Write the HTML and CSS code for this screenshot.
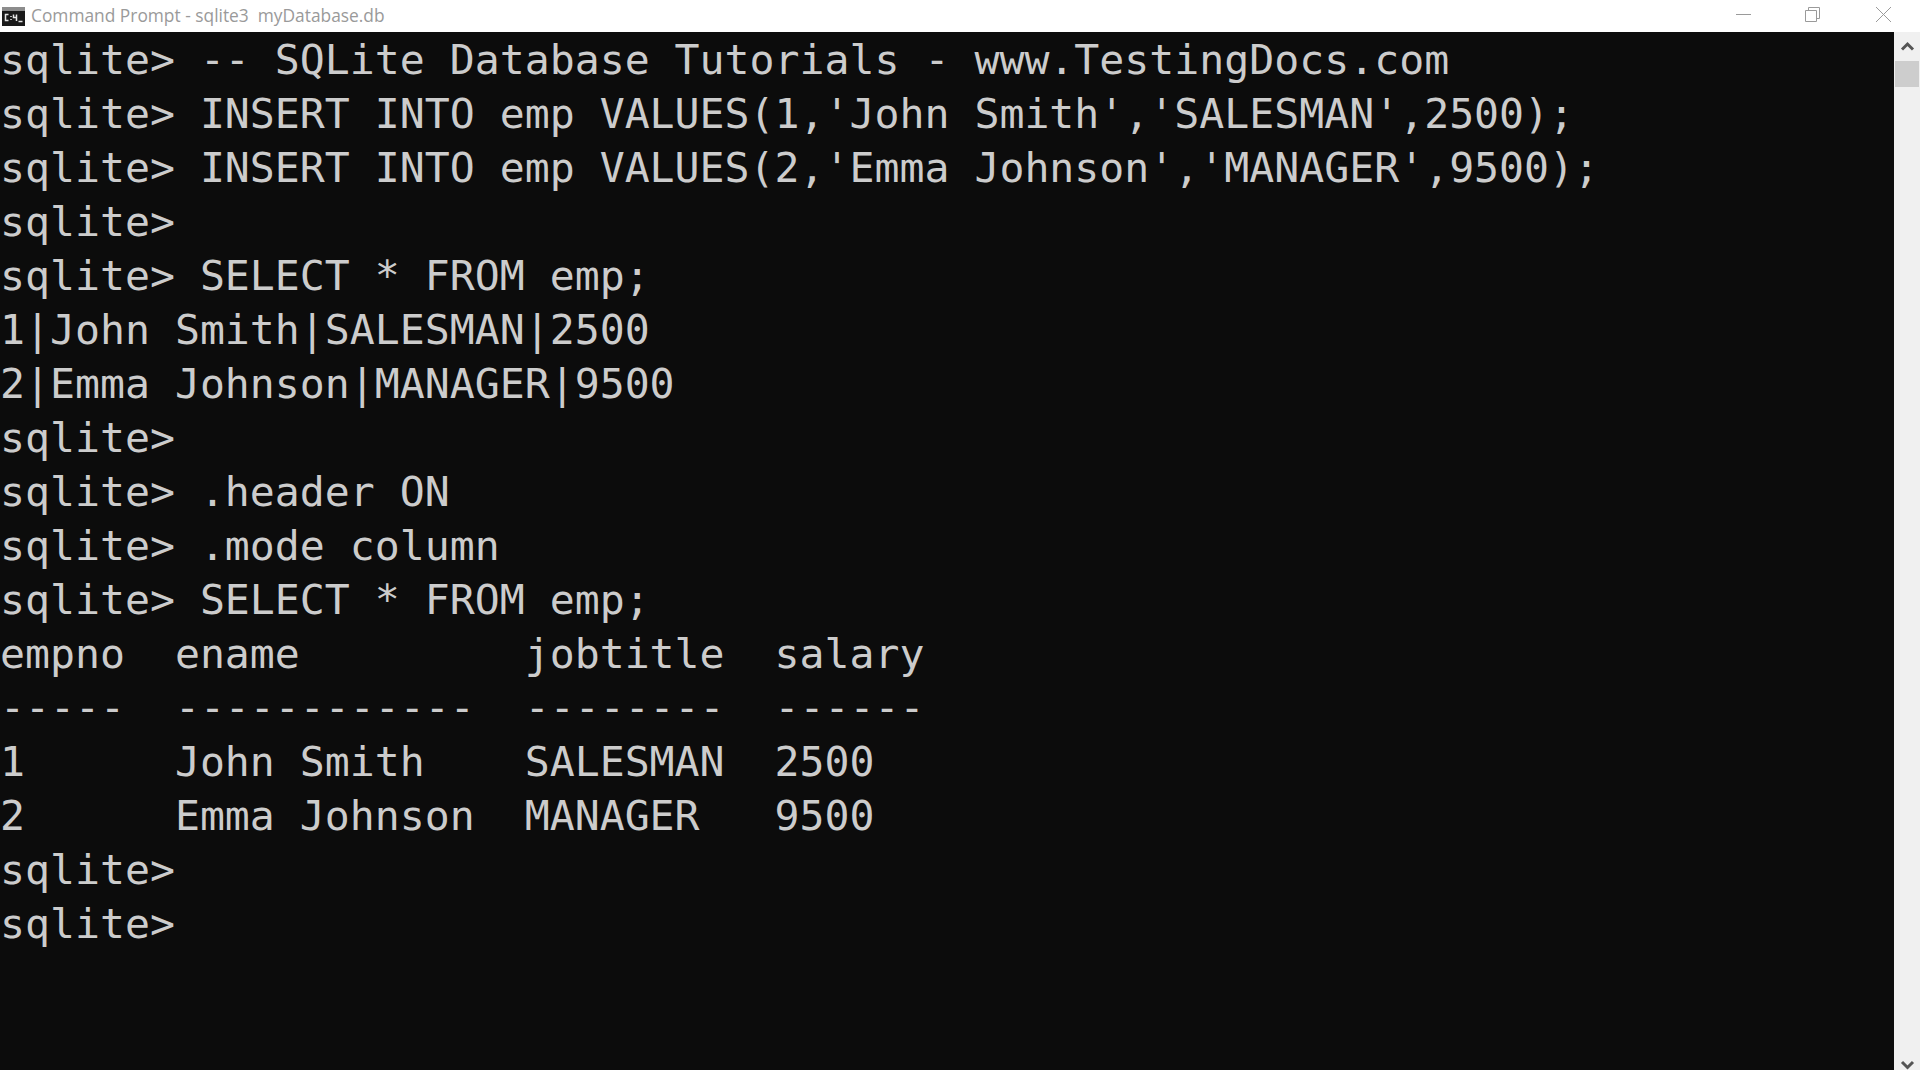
FILE: index.html
```html
<!DOCTYPE html>
<html lang="en">
<head>
<meta charset="utf-8">
<title>Command Prompt - sqlite3 myDatabase.db</title>
<link rel="stylesheet" href="styles.css">
</head>
<body>
<div class="window">
  <header class="titlebar">
    <svg class="app-icon" width="23" height="19" viewBox="0 0 23 19" aria-hidden="true">
      <rect x="0" y="0" width="23" height="19" fill="#1a1a1a"/>
      <rect x="0" y="0" width="23" height="4" fill="#8c8c8c"/>
      <path d="M6.5 7.5H3.5V13.5H6.5M9 9V10M9 12V13M11.5 7.5V10.5H14.5M14.5 7.5V14M16.5 14.5H20.5" fill="none" stroke="#e6e6e6" stroke-width="1.5"/>
    </svg>
    <span class="title">Command Prompt - sqlite3  myDatabase.db</span>
    <div class="controls">
      <svg class="ctl" width="46" height="32" viewBox="0 0 46 32" aria-hidden="true"><path d="M14 14.5H29" stroke="#9a9a9a" stroke-width="1"/></svg>
      <svg class="ctl ctl-restore" width="46" height="32" viewBox="0 0 46 32" aria-hidden="true"><path d="M14.5 10.5H25.5V21.5H14.5ZM17.5 10V7.5H28.5V18.5H26" fill="none" stroke="#9a9a9a" stroke-width="1"/></svg>
      <svg class="ctl ctl-close" width="46" height="32" viewBox="0 0 46 32" aria-hidden="true"><path d="M16 7L31 22M31 7L16 22" fill="none" stroke="#9a9a9a" stroke-width="1"/></svg>
    </div>
  </header>
  <div class="body">
    <main class="console">
      <div class="line">sqlite&gt; -- SQLite Database Tutorials - www.TestingDocs.com</div>
      <div class="line">sqlite&gt; INSERT INTO emp VALUES(1,'John Smith','SALESMAN',2500);</div>
      <div class="line">sqlite&gt; INSERT INTO emp VALUES(2,'Emma Johnson','MANAGER',9500);</div>
      <div class="line">sqlite&gt;</div>
      <div class="line">sqlite&gt; SELECT * FROM emp;</div>
      <div class="line">1|John Smith|SALESMAN|2500</div>
      <div class="line">2|Emma Johnson|MANAGER|9500</div>
      <div class="line">sqlite&gt;</div>
      <div class="line">sqlite&gt; .header ON</div>
      <div class="line">sqlite&gt; .mode column</div>
      <div class="line">sqlite&gt; SELECT * FROM emp;</div>
      <div class="line">empno  ename         jobtitle  salary</div>
      <div class="line">-----  ------------  --------  ------</div>
      <div class="line">1      John Smith    SALESMAN  2500</div>
      <div class="line">2      Emma Johnson  MANAGER   9500</div>
      <div class="line">sqlite&gt;</div>
      <div class="line">sqlite&gt;</div>
    </main>
    <aside class="scrollbar">
      <svg class="arrow" width="25" height="29" viewBox="0 0 25 29" aria-hidden="true"><path d="M7 17.5L12.5 12L18 17.5" fill="none" stroke="#555" stroke-width="3"/></svg>
      <div class="thumb"></div>
      <div class="track"></div>
      <svg class="arrow" width="25" height="29" viewBox="0 0 25 29" aria-hidden="true"><path d="M7 21L12.5 26.5L18 21" fill="none" stroke="#555" stroke-width="3"/></svg>
    </aside>
  </div>
</div>
</body>
</html>
```
FILE: styles.css
```css
html, body {
  margin: 0;
  padding: 0;
  height: 100%;
  overflow: hidden;
  background: #0c0c0c;
}
.window {
  display: flex;
  flex-direction: column;
  height: 1070px;
  width: 1920px;
}
.titlebar {
  display: flex;
  align-items: center;
  height: 32px;
  flex: none;
  background: #ffffff;
  padding-left: 2px;
}
.app-icon {
  flex: none;
  margin-top: 1px;
  margin-right: 6px;
}
.title {
  font-family: "Open Sans", "Noto Sans", sans-serif;
  font-size: 17.35px;
  color: #9a9a9a;
  white-space: pre;
  margin-bottom: 2px;
}
.controls {
  margin-left: auto;
  display: flex;
  padding-right: 14px;
}
.ctl {
  display: block;
  margin-left: 23px;
}
.body {
  flex: 1;
  display: flex;
  min-height: 0;
}
.console {
  flex: 1;
  background: #0c0c0c;
  color: #cccccc;
  font-family: "DejaVu Sans Mono", monospace;
  font-size: 41.5px;
  line-height: 54px;
  padding-top: 1px;
  overflow: hidden;
}
.line {
  height: 54px;
  white-space: pre;
}
.scrollbar {
  flex: none;
  width: 26px;
  background: #f0f0f0;
  display: flex;
  flex-direction: column;
}
.arrow {
  display: block;
  flex: none;
  margin-left: 1px;
}
.thumb {
  flex: none;
  height: 26px;
  margin: 0 1px;
  background: #cdcdcd;
}
.track {
  flex: 1;
}
```
